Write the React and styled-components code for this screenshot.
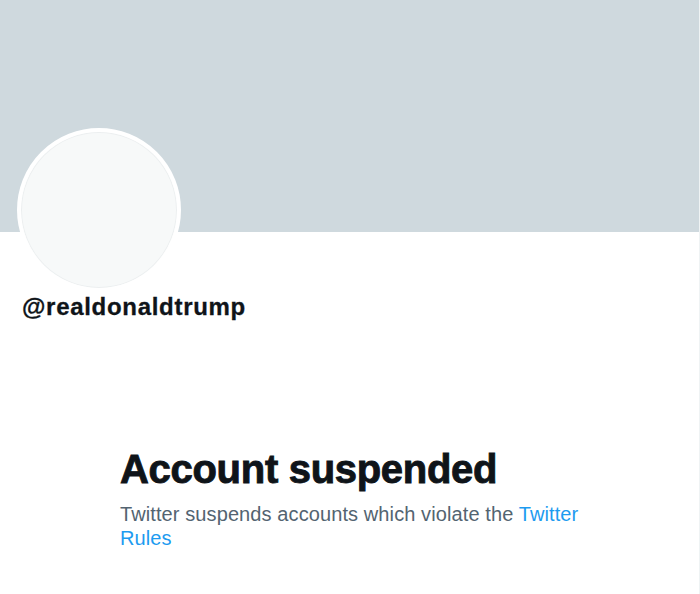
import React from 'react';
import styled, { createGlobalStyle } from 'styled-components';

const GlobalStyle = createGlobalStyle`
  html, body {
    margin: 0;
    padding: 0;
    background: #ffffff;
  }
  body {
    font-family: "Liberation Sans", Arial, sans-serif;
    color: #0f1419;
  }
`;

const Page = styled.div`
  width: 700px;
  min-height: 594px;
  box-sizing: border-box;
  border-right: 1px solid #eff3f4;
  display: flex;
  flex-direction: column;
`;

const Banner = styled.div`
  height: 232px;
  background-color: #cfd9de;
`;

const ProfileHeader = styled.div`
  display: flex;
  flex-direction: column;
  align-items: flex-start;
  padding-left: 17px;
`;

const Avatar = styled.div`
  width: 164px;
  height: 164px;
  margin-top: -104px;
  box-sizing: border-box;
  border-radius: 50%;
  border: 4px solid #ffffff;
  background-color: #f7f9f9;
  box-shadow: inset 0 0 0 1px #eceff0;
`;

const Handle = styled.div`
  margin-top: 1px;
  padding-left: 5px;
  font-size: 24px;
  line-height: 28px;
  font-weight: 700;
  letter-spacing: 0.7px;
  color: #0f1419;
  -webkit-text-stroke: 0.3px #0f1419;
`;

const Notice = styled.section`
  margin-top: 124px;
  padding-left: 120px;
  max-width: 480px;
`;

const Title = styled.h1`
  margin: 0;
  font-size: 40px;
  line-height: 48px;
  font-weight: 800;
  letter-spacing: -0.3px;
  color: #0f1419;
  -webkit-text-stroke: 0.9px #0f1419;
`;

const Message = styled.p`
  margin: 9px 0 0;
  font-size: 20px;
  line-height: 24px;
  letter-spacing: 0.1px;
  color: #536471;
`;

const RulesLink = styled.a`
  color: #1d9bf0;
  text-decoration: none;
`;

export default function App() {
  return (
    <>
      <GlobalStyle />
      <Page>
        <Banner />
        <ProfileHeader>
          <Avatar />
          <Handle>@realdonaldtrump</Handle>
        </ProfileHeader>
        <Notice>
          <Title>Account suspended</Title>
          <Message>
            Twitter suspends accounts which violate the{' '}
            <RulesLink href="#">Twitter Rules</RulesLink>
          </Message>
        </Notice>
      </Page>
    </>
  );
}
